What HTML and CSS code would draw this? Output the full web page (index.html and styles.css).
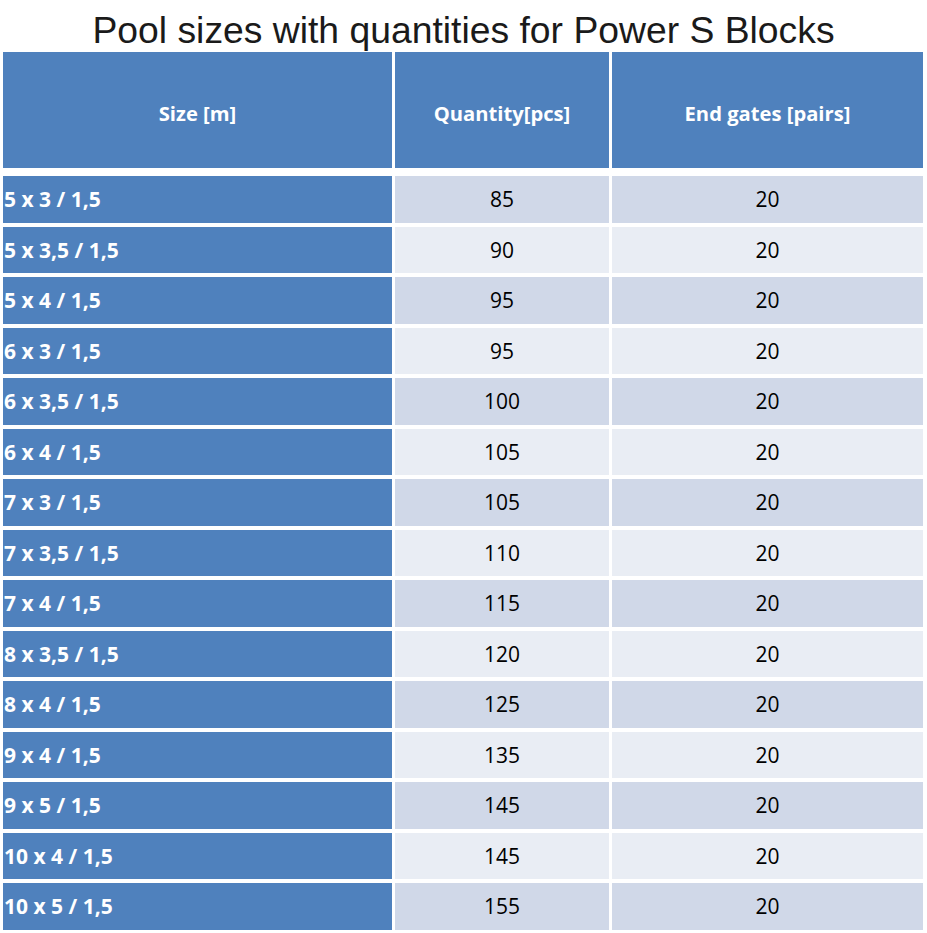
FILE: index.html
```html
<!DOCTYPE html>
<html>
<head>
<meta charset="utf-8">
<link rel="stylesheet" href="styles.css">
</head>
<body>
<h1 class="title">Pool sizes with quantities for Power S Blocks</h1>
<div class="table">
  <div class="head">
    <div class="hcell">Size [m]</div>
    <div class="hcell">Quantity[pcs]</div>
    <div class="hcell">End gates [pairs]</div>
  </div>
  <div class="body">
    <div class="lab">5 x 3 / 1,5</div><div class="num odd">85</div><div class="num odd">20</div>
    <div class="lab">5 x 3,5 / 1,5</div><div class="num even">90</div><div class="num even">20</div>
    <div class="lab">5 x 4 / 1,5</div><div class="num odd">95</div><div class="num odd">20</div>
    <div class="lab">6 x 3 / 1,5</div><div class="num even">95</div><div class="num even">20</div>
    <div class="lab">6 x 3,5 / 1,5</div><div class="num odd">100</div><div class="num odd">20</div>
    <div class="lab">6 x 4 / 1,5</div><div class="num even">105</div><div class="num even">20</div>
    <div class="lab">7 x 3 / 1,5</div><div class="num odd">105</div><div class="num odd">20</div>
    <div class="lab">7 x 3,5 / 1,5</div><div class="num even">110</div><div class="num even">20</div>
    <div class="lab">7 x 4 / 1,5</div><div class="num odd">115</div><div class="num odd">20</div>
    <div class="lab">8 x 3,5 / 1,5</div><div class="num even">120</div><div class="num even">20</div>
    <div class="lab">8 x 4 / 1,5</div><div class="num odd">125</div><div class="num odd">20</div>
    <div class="lab">9 x 4 / 1,5</div><div class="num even">135</div><div class="num even">20</div>
    <div class="lab">9 x 5 / 1,5</div><div class="num odd">145</div><div class="num odd">20</div>
    <div class="lab">10 x 4 / 1,5</div><div class="num even">145</div><div class="num even">20</div>
    <div class="lab">10 x 5 / 1,5</div><div class="num odd">155</div><div class="num odd">20</div>
  </div>
</div>
</body>
</html>
```
FILE: styles.css
```css
html, body {
  margin: 0;
  padding: 0;
  background: #ffffff;
}
.title {
  margin: 0;
  height: 52px;
  font-family: "Liberation Sans", Arial, sans-serif;
  font-weight: normal;
  font-size: 37.3px;
  line-height: 60px;
  color: #1a1a1a;
  text-align: center;
  overflow: hidden;
}
.table {
  margin-left: 3px;
  font-family: "Open Sans", Lato, sans-serif;
  font-size: 21px;
}
.head, .body {
  display: grid;
  grid-template-columns: 389px 214px 311px;
  column-gap: 3px;
}
.head {
  height: 116px;
}
.body {
  margin-top: 8px;
  grid-auto-rows: 46.5px;
  row-gap: 4px;
}
.hcell {
  background: #4f81bd;
  color: #ffffff;
  font-weight: bold;
  font-size: 20.2px;
  display: flex;
  align-items: center;
  justify-content: center;
  padding-top: 5px;
}
.lab {
  background: #4f81bd;
  color: #ffffff;
  font-weight: bold;
  display: flex;
  align-items: center;
  padding-left: 1px;
}
.num {
  display: flex;
  align-items: center;
  justify-content: center;
  color: #000000;
}
.odd {
  background: #d0d8e8;
}
.even {
  background: #e9edf4;
}
```
